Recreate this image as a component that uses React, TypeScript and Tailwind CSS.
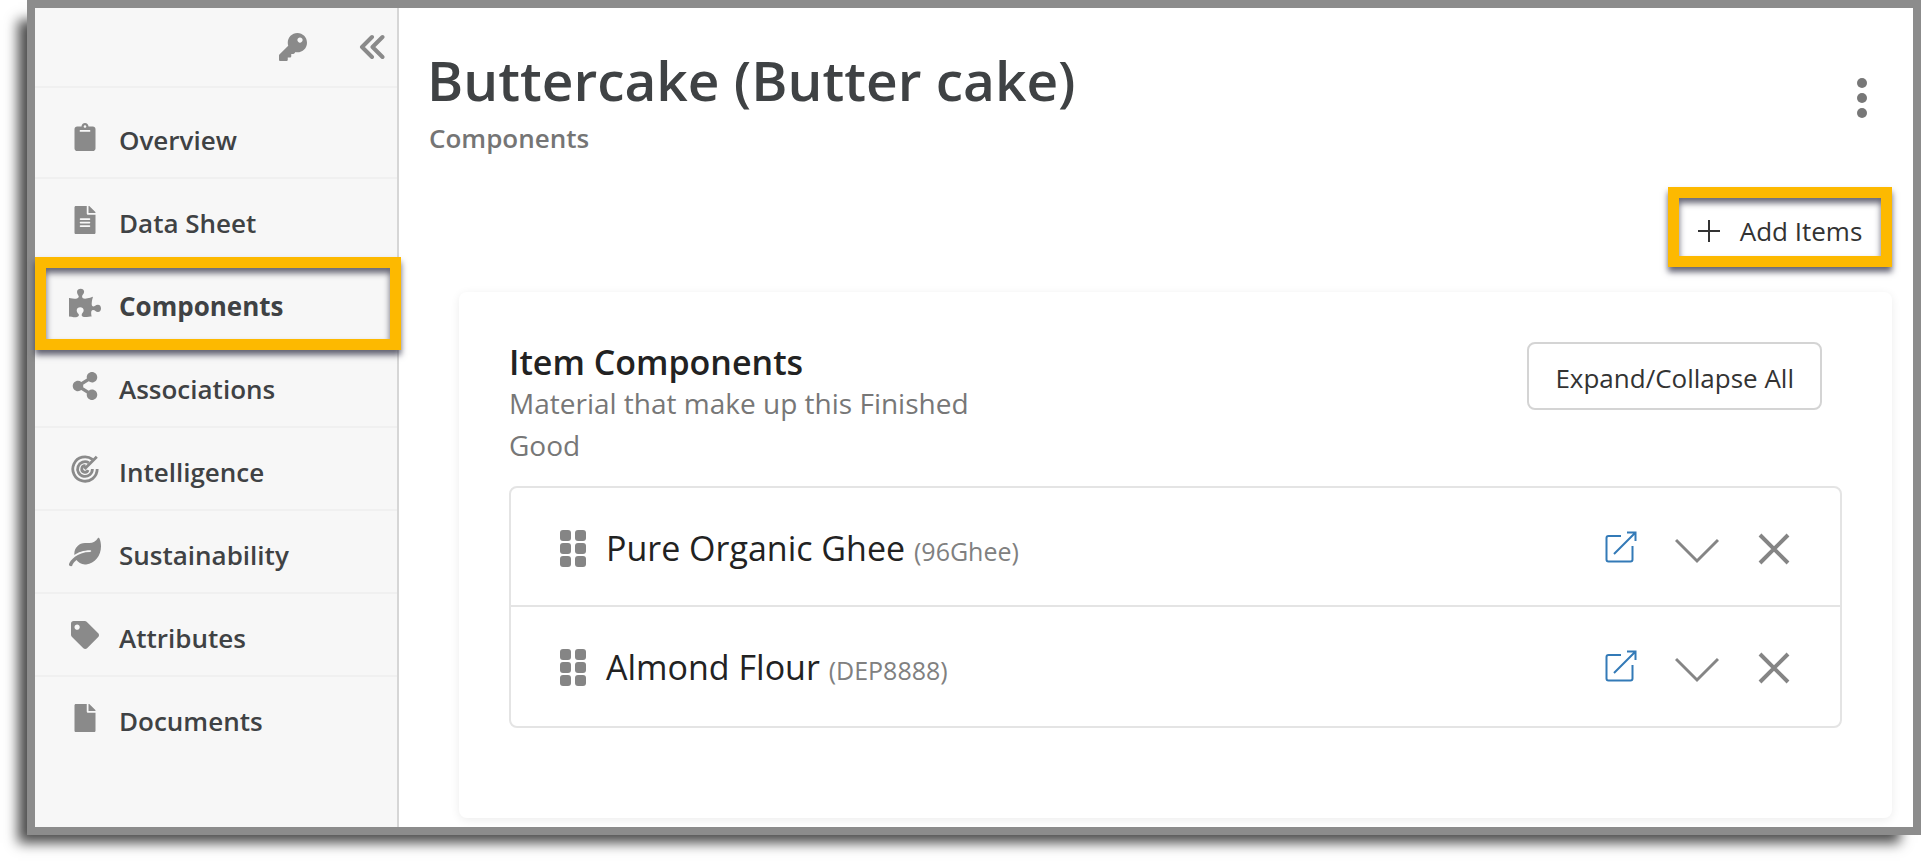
import type { IconType } from "react-icons";
import {
  FaClipboard,
  FaFile,
  FaFileAlt,
  FaKey,
  FaLeaf,
  FaPuzzlePiece,
  FaShareAlt,
  FaTag,
} from "react-icons/fa";

type NavItem = {
  label: string;
  icon: IconType | typeof RadarIcon;
  wide?: boolean;
  active?: boolean;
};

type Item = {
  name: string;
  code: string;
};

function RadarIcon({ className }: { className?: string }) {
  return (
    <svg
      className={className}
      viewBox="0 0 28 28"
      fill="none"
      stroke="currentColor"
      strokeWidth="2.8"
    >
      <path d="M21.500 4.400A12.200 12.200 0 1 0 26.200 14" />
      <path d="M17.800 7.700A7.400 7.400 0 1 0 21.400 14" />
      <path d="M25.800 1.800L13.500 14M14.500 10.800A3.200 3.200 0 1 0 17 15" />
    </svg>
  );
}

const navItems: NavItem[] = [
  { label: "Overview", icon: FaClipboard },
  { label: "Data Sheet", icon: FaFileAlt },
  { label: "Components", icon: FaPuzzlePiece, wide: true, active: true },
  { label: "Associations", icon: FaShareAlt },
  { label: "Intelligence", icon: RadarIcon },
  { label: "Sustainability", icon: FaLeaf, wide: true },
  { label: "Attributes", icon: FaTag },
  { label: "Documents", icon: FaFile },
];

const items: Item[] = [
  { name: "Pure Organic Ghee", code: "96Ghee" },
  { name: "Almond Flour", code: "DEP8888" },
];

function Highlight({ className }: { className: string }) {
  return (
    <span
      className={`pointer-events-none absolute z-10 border-[11px] border-[#fdb900] shadow-[0_5px_6px_rgba(50,50,70,0.75),inset_0_5px_6px_rgba(50,50,70,0.75)] ${className}`}
    />
  );
}

function Sidebar() {
  return (
    <aside className="w-[364px] shrink-0 border-r-2 border-[#d6d6d6] bg-[#f7f7f7] text-[#8a8a8a]">
      <div className="flex h-20 items-center justify-end gap-[52px] border-b-2 border-[#f0f0f0] pr-3">
        <button aria-label="Permissions">
          <FaKey size={28} />
        </button>
        <button aria-label="Collapse menu">
          <svg
            width="26"
            height="26"
            viewBox="0 0 26 26"
            fill="none"
            stroke="currentColor"
            strokeWidth="4"
            strokeLinecap="round"
            strokeLinejoin="round"
          >
            <path d="M13 3L3 13l10 10M23.500 3L13.500 13l10 10" />
          </svg>
        </button>
      </div>
      <nav className="pt-2">
        {navItems.map(({ label, icon: Icon, wide, active }) => (
          <a
            key={label}
            href="#"
            className="relative flex h-[83px] items-center border-b-2 border-[#f0f0f0] pt-2 last:border-transparent"
          >
            <span className="flex w-[84px] justify-center pl-4 pb-2">
              <Icon className={wide ? "size-8" : "size-7"} />
            </span>
            <span
              className={
                active
                  ? "text-[26px] font-bold text-[#3f4244]"
                  : "text-[26px] font-semibold text-[#3f4244]"
              }
            >
              {label}
            </span>
            {active && <Highlight className="-top-[5px] -bottom-[7px] left-0 -right-1" />}
          </a>
        ))}
      </nav>
    </aside>
  );
}

function ItemRow({ item }: { item: Item }) {
  return (
    <li className="flex h-[119px] items-center border-b-2 border-[#e4e4e4] pt-1 pl-[49px] pr-[50px] last:border-transparent">
      <svg className="shrink-0 text-[#858585]" width="26" height="37" viewBox="0 0 26 37" fill="currentColor">
        {[0, 13, 26].map((y) => (
          <g key={y}>
            <rect x="0" y={y} width="11" height="11" rx="3" />
            <rect x="15" y={y} width="11" height="11" rx="3" />
          </g>
        ))}
      </svg>
      <p className="flex-1 pl-5 text-[34px] text-[#222]">
        {item.name} <span className="text-[25px] text-[#808080]">({item.code})</span>
      </p>
      <div className="flex items-center text-[#858585]">
        <a href="#" aria-label={`Open ${item.name}`} className="pb-1 text-[#337ab7]">
          <svg width="32" height="32" viewBox="0 0 32 32" fill="none" stroke="currentColor" strokeWidth="2">
            <path d="M16 5H3.500A2 2 0 0 0 1.500 7V28.500A2 2 0 0 0 3.500 30.500H25.500A2 2 0 0 0 27.500 28.500V15" />
            <path d="M9 23L30.500 1.500M22 1.500H30.500V10" />
          </svg>
        </a>
        <button aria-label={`Expand ${item.name}`} className="ml-[38px] pt-1">
          <svg width="44" height="26" viewBox="0 0 44 26" fill="none" stroke="currentColor" strokeWidth="3">
            <path d="M1 2L22 23L43 2" />
          </svg>
        </button>
        <button aria-label={`Remove ${item.name}`} className="ml-[39px]">
          <svg width="32" height="32" viewBox="0 0 32 32" fill="none" stroke="currentColor" strokeWidth="4">
            <path d="M2 2L30 30M30 2L2 30" />
          </svg>
        </button>
      </div>
    </li>
  );
}

export default function App() {
  return (
    <div className="min-h-screen bg-white pb-[27px] pl-[27px] font-['Open_Sans',sans-serif]">
      <div className="flex border-8 border-[#8c8c8c] bg-white shadow-[-15px_14px_12px_-6px_rgba(0,0,0,0.7)]">
        <Sidebar />
        <main className="flex-1 pb-[9px] pl-[30px] pr-[21px]">
          <header className="flex items-start justify-between pr-6">
            <div>
              <h1 className="-ml-0.5 pt-[38px] text-[55px] leading-[68px] font-semibold text-[#3f4244]">
                Buttercake (Butter cake)
              </h1>
              <p className="pt-1.5 text-[26px] leading-9 font-semibold text-[#757575]">Components</p>
            </div>
            <button aria-label="More actions" className="pt-[70px] text-[#777]">
              <svg width="12" height="40" viewBox="0 0 12 40" fill="currentColor">
                <circle cx="6" cy="5" r="5" />
                <circle cx="6" cy="20" r="5" />
                <circle cx="6" cy="35" r="5" />
              </svg>
            </button>
          </header>
          <div className="flex justify-end pt-[31px]">
            <button className="relative flex h-20 w-[224px] items-center justify-center gap-5 pt-2 text-[26px] text-[#333]">
              <svg width="22" height="22" viewBox="0 0 22 22" stroke="currentColor" strokeWidth="2">
                <path d="M11 0V22M0 11H22" />
              </svg>
              Add Items
              <Highlight className="inset-0" />
            </button>
          </div>
          <section className="mt-[25px] ml-[30px] rounded-lg px-[50px] pt-[50px] pb-[90px] shadow-[0_2px_10px_rgba(0,0,0,0.08)]">
            <div className="flex items-start justify-between pr-5">
              <div>
                <h2 className="text-[34px] leading-10 font-semibold text-[#222]">Item Components</h2>
                <p className="w-[480px] text-[28px] leading-[42px] text-[#777]">
                  Material that make up this Finished Good
                </p>
              </div>
              <button className="h-[68px] rounded-lg border-2 border-[#d4d4d4] px-[26px] pt-1 text-[26px] text-[#333]">
                Expand/Collapse All
              </button>
            </div>
            <ul className="mt-5 rounded-lg border-2 border-[#e4e4e4]">
              {items.map((item) => (
                <ItemRow key={item.code} item={item} />
              ))}
            </ul>
          </section>
        </main>
      </div>
    </div>
  );
}
